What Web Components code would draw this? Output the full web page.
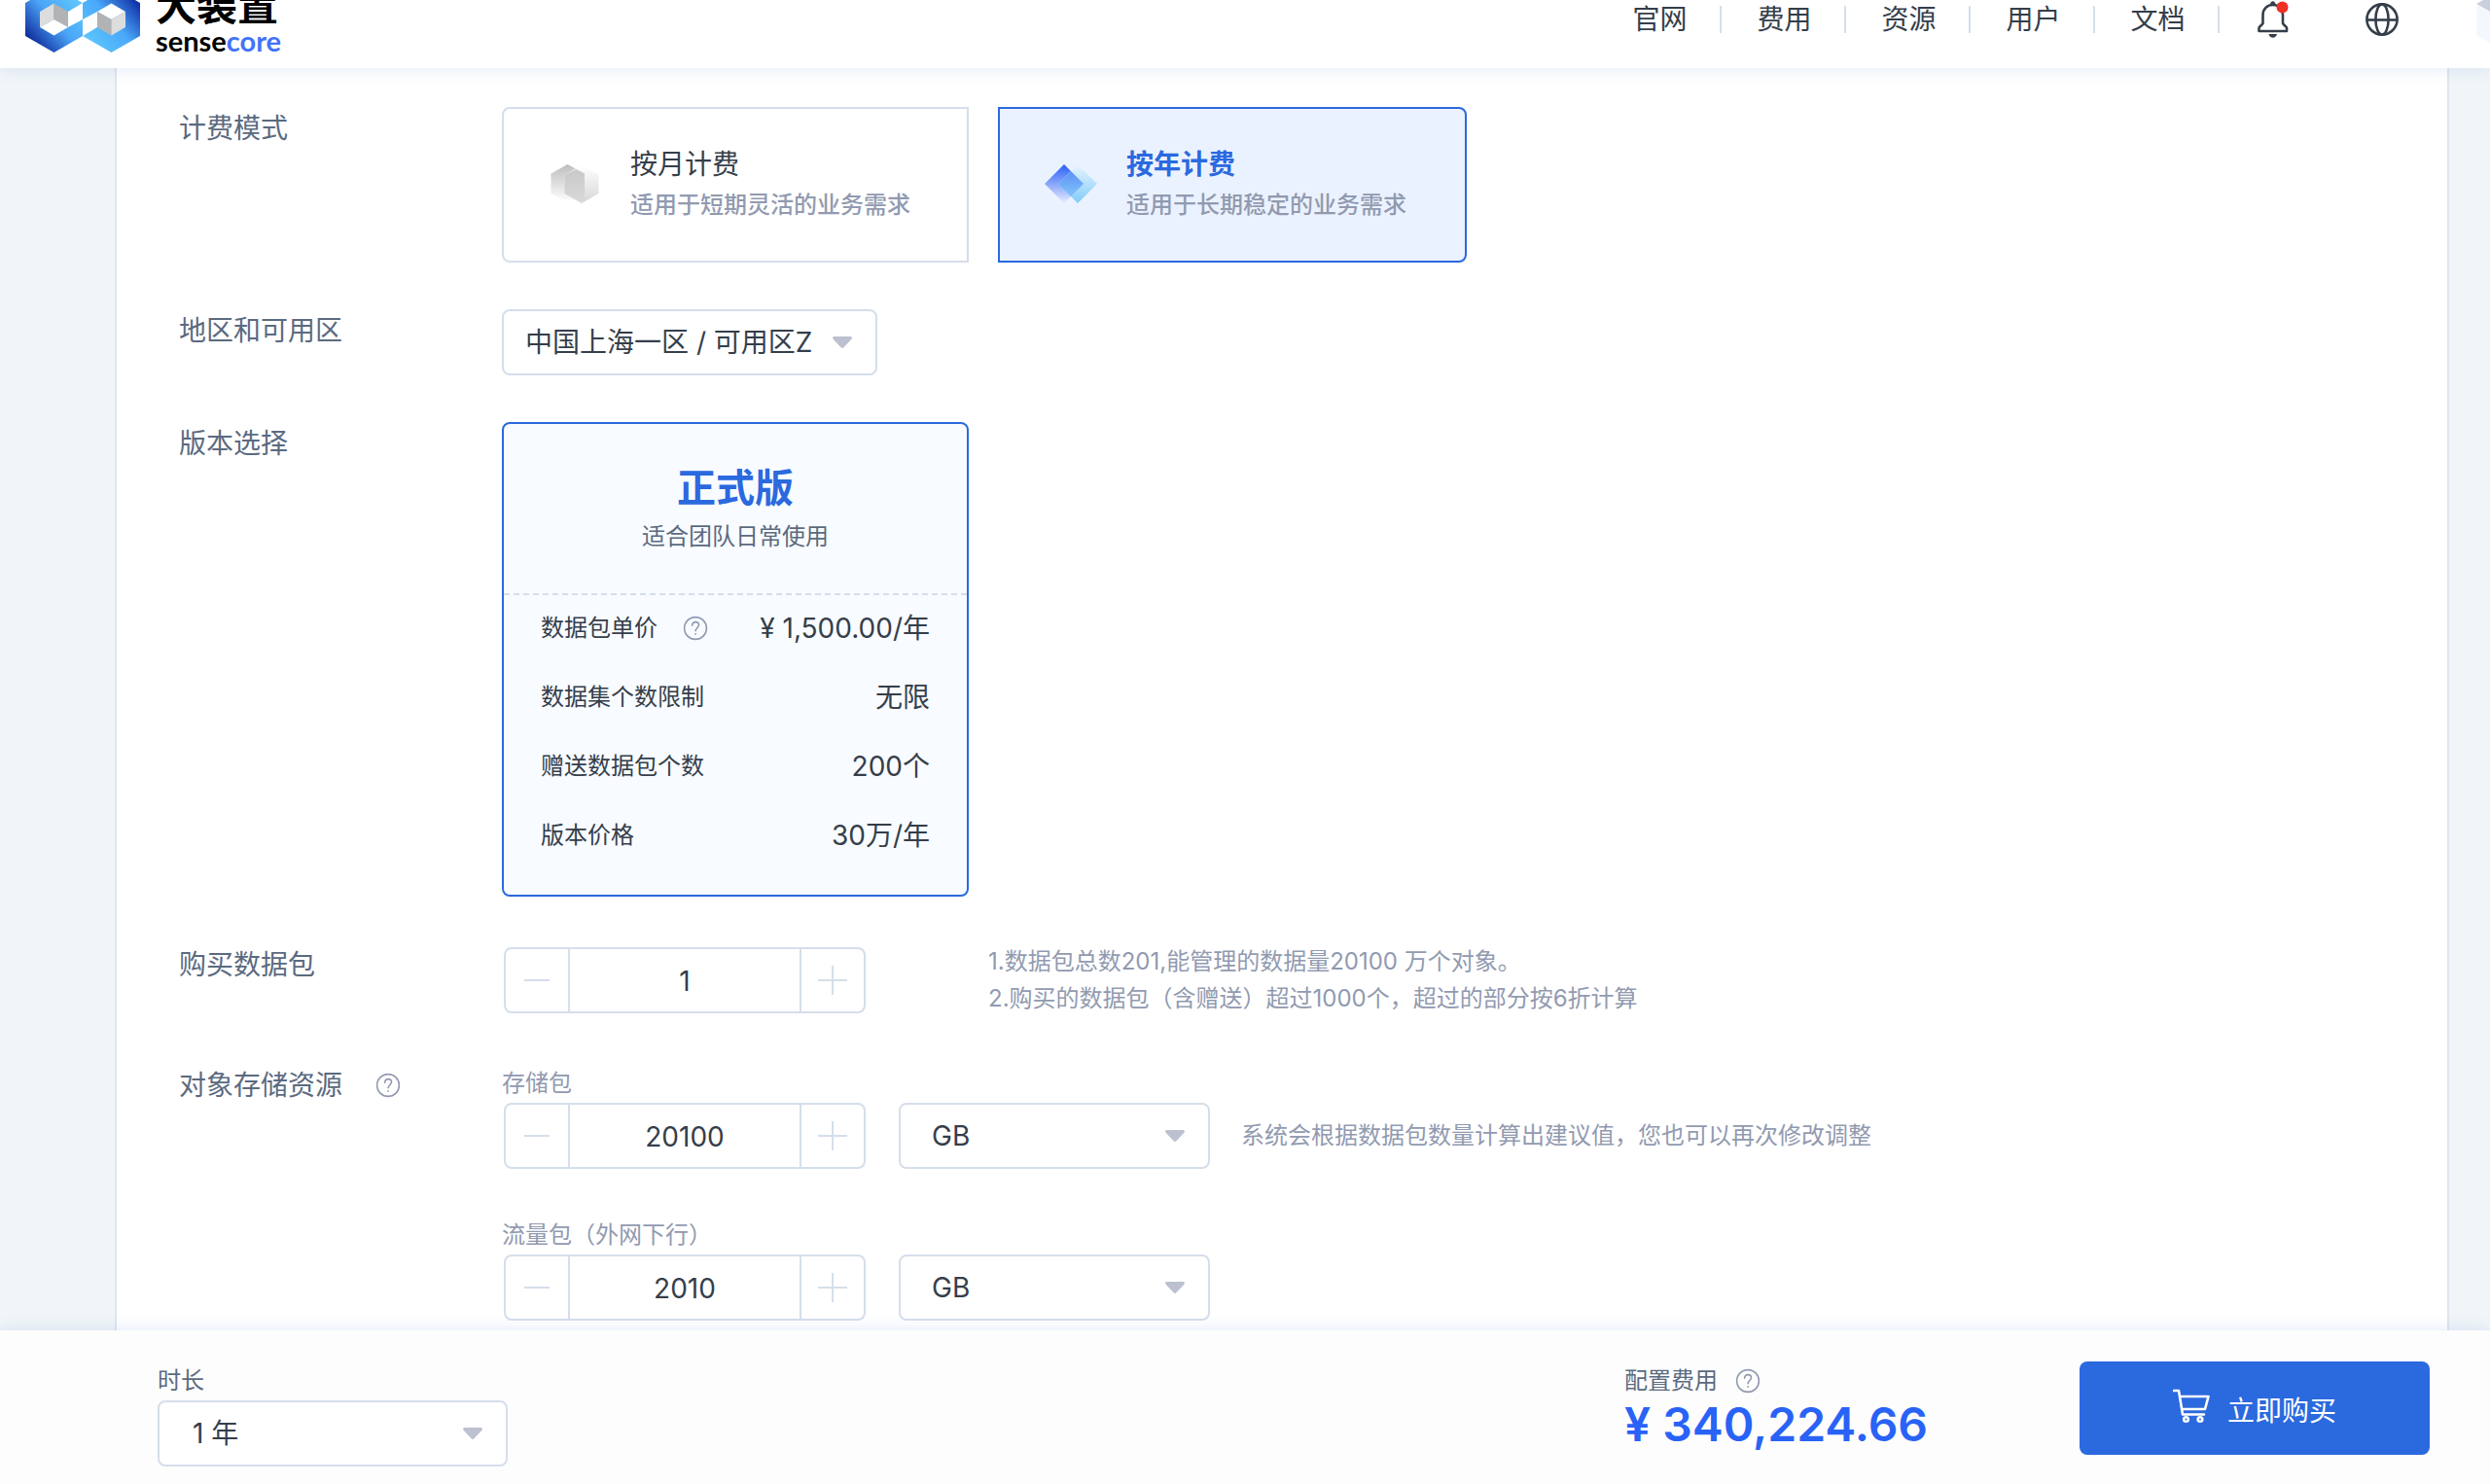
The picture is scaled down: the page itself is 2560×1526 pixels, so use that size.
<!DOCTYPE html>
<html lang="zh-CN">
<head>
<meta charset="utf-8">
<meta name="viewport" content="width=device-width, initial-scale=1">
<title>大装置 sensecore</title>
<style>
  :root {
    --ink: #353e4a;
    --label: #5b6a80;
    --muted: #919ab0;
    --line: #d5deeb;
    --primary: #2b69de;
    --bar-shadow: 0 0 16px rgba(60, 110, 210, .16);
  }
  html, body { margin: 0; height: 100%; }
  body {
    font-family: Inter, "Noto Sans CJK SC", sans-serif;
    font-size: 28px;
    line-height: 44px;
    color: var(--ink);
    background: #f1f5f8;
  }
  label { cursor: pointer; }
</style>
</head>
<body>
<purchase-page></purchase-page>

<script>
const define = (name, html, setup, options = {}) => {
  const template = document.createElement('template');
  template.innerHTML = html;
  customElements.define(name, class extends HTMLElement {
    static formAssociated = !!options.field;
    constructor() {
      super();
      this.attachShadow({ mode: 'open', delegatesFocus: !!options.field })
        .append(template.content.cloneNode(true));
    }
    connectedCallback() {
      if (setup) setup(this, this.shadowRoot);
    }
  });
};

/* Round question-mark hint */
define('help-tip', `
  <style>
    :host { display: inline-flex; }
    button { display: flex; padding: 0; border: 0; background: none; cursor: help; }
    svg { display: block; width: 26px; height: 26px; fill: none; stroke: var(--muted); stroke-width: 1.6; stroke-linecap: round; }
  </style>
  <button type="button" aria-label="说明">
    <svg viewBox="0 0 26 26"><circle cx="13" cy="13" r="11.4"/><path d="M9.6 10.2c0-2.2 1.5-3.6 3.5-3.6s3.4 1.3 3.4 3.2c0 2.6-3.4 2.9-3.4 6M13.1 18.8v.4"/></svg>
  </button>`);

/* Drop-down with an optional caption */
define('select-box', `
  <style>
    :host { display: flex; flex-direction: column; width: 320px; }
    label { font-size: 24px; line-height: 40px; color: var(--label); }
    label:empty { display: none; }
    .box { display: grid; align-items: center; }
    select, svg { grid-area: 1 / 1; }
    select {
      appearance: none; box-sizing: border-box; width: 100%; height: 68px; margin: 0;
      padding: 0 56px 0 var(--inset, 32px);
      border: 2px solid var(--line); border-radius: 8px; background: #fff;
      font: inherit; color: inherit; cursor: pointer;
    }
    svg { justify-self: end; width: 20px; height: 12px; margin-right: 26px; fill: #bcc0d0; pointer-events: none; }
  </style>
  <label for="field"></label>
  <div class="box">
    <select id="field"></select>
    <svg viewBox="0 0 20 12"><path d="M1.8 0h16.4c1.6 0 2.3 1.6 1.2 2.7l-8 8.500c-.8.9-2 .9-2.8 0l-8-8.500C-.5 1.600.2 0 1.800 0z"/></svg>
  </div>`, (host, root) => {
  root.querySelector('label').textContent = host.getAttribute('caption') || '';
  const select = root.querySelector('select');
  if (host.hasAttribute('name')) select.setAttribute('aria-label', host.getAttribute('name'));
  select.replaceChildren(...host.getAttribute('options').split('|').map(t => new Option(t)));
}, { field: true });

/* Number field with minus and plus buttons, with an optional caption */
define('number-stepper', `
  <style>
    :host { display: flex; flex-direction: column; }
    label { font-size: 24px; line-height: 40px; color: var(--muted); }
    label:empty { display: none; }
    .box {
      display: grid; grid-template-columns: 64px 1fr 64px; box-sizing: border-box;
      width: 372px; height: 68px; margin: 0 2px;
      border: 2px solid var(--line); border-radius: 8px; background: #fff; overflow: hidden;
    }
    button { display: grid; place-items: center; padding: 0; border: 0; background: none; cursor: pointer; }
    svg { width: 30px; height: 30px; stroke: var(--line); stroke-width: 2; }
    input {
      box-sizing: border-box; width: 100%; min-width: 0; margin: 0; padding: 2px 0 0; border: 0;
      border-left: 2px solid var(--line); border-right: 2px solid var(--line);
      background: none; text-align: center; font: inherit; color: inherit;
    }
  </style>
  <label for="field"></label>
  <div class="box">
    <button type="button" aria-label="减少"><svg viewBox="0 0 30 30"><path d="M2 15h26"/></svg></button>
    <input id="field" type="text" inputmode="numeric">
    <button type="button" aria-label="增加"><svg viewBox="0 0 30 30"><path d="M0 15h30M15 0v30"/></svg></button>
  </div>`, (host, root) => {
  root.querySelector('label').textContent = host.getAttribute('caption') || '';
  const input = root.querySelector('input');
  input.value = host.getAttribute('value');
  if (host.hasAttribute('name')) input.setAttribute('aria-label', host.getAttribute('name'));
  const [minus, plus] = root.querySelectorAll('button');
  minus.onclick = () => { input.value = Math.max(1, Number(input.value) - 1); };
  plus.onclick = () => { input.value = Number(input.value) + 1; };
}, { field: true });

/* Form row: label column and control column */
define('form-row', `
  <style>
    :host { display: grid; grid-template-columns: 332px 1fr; align-items: start; }
    .label { display: flex; align-items: center; gap: 34px; color: var(--label); }
  </style>
  <div class="label"><slot name="label"></slot></div>
  <div><slot></slot></div>`);

/* Monthly or yearly billing */
define('billing-mode', `
  <style>
    :host { display: block; }
    .cards { display: grid; grid-template-columns: 480px 482px; gap: 30px; }
    label {
      display: flex; align-items: center; gap: 30px; box-sizing: border-box; height: 160px;
      padding: 0 46px 2px; border: 2px solid var(--line); border-radius: 8px 0 0 8px; background: #fff; cursor: pointer;
    }
    label:last-child { border-radius: 0 8px 8px 0; }
    label:has(input:checked) { border-color: var(--primary); background: #ebf2ff; }
    label:has(input:checked) .name { color: var(--primary); font-weight: 700; }
    input { position: absolute; opacity: 0; margin: 0; pointer-events: none; }
    svg { flex: none; width: 54px; height: 40px; }
    .text { display: flex; flex-direction: column; }
    .hint { font-size: 24px; line-height: 40px; font-weight: 500; color: var(--muted); }
  </style>
  <div class="cards" role="radiogroup" aria-label="计费模式">
    <label>
      <input type="radio" name="mode">
      <svg viewBox="0 0 54 40">
        <defs>
          <linearGradient id="a" x2="0" y2="1"><stop stop-color="#bdbdbd"/><stop offset="1" stop-color="#fff"/></linearGradient>
          <linearGradient id="b" x2="0" y2="1"><stop stop-color="#fff"/><stop offset="1" stop-color="#d6d6d6"/></linearGradient>
          <linearGradient id="c" x2="0" y2="1"><stop stop-color="#c8c8c8"/><stop offset="1" stop-color="#dadada"/></linearGradient>
        </defs>
        <path fill="url(#a)" d="M19.500 0L37 9.600v20L19.500 39 2.500 29.500v-20z"/>
        <path fill="url(#b)" d="M34 1l17.500 9.500v19.500L34 40 16.500 30V10.500z"/>
        <path fill="url(#c)" d="M16.500 10.500L28.500 5 37 9.600v28.500L34 40 16.500 30z"/>
      </svg>
      <span class="text"><span class="name">按月计费</span><span class="hint">适用于短期灵活的业务需求</span></span>
    </label>
    <label>
      <input type="radio" name="mode" checked>
      <svg viewBox="0 0 54 40">
        <defs>
          <linearGradient id="d" x2="0" y2="1"><stop stop-color="#2a5ff5"/><stop offset="1" stop-color="#e6ecff"/></linearGradient>
          <linearGradient id="e" x2="0" y2="1"><stop stop-color="#eaf3ff"/><stop offset="1" stop-color="#7fcdf8"/></linearGradient>
          <linearGradient id="f" x2="0" y2="1"><stop stop-color="#5b92f6"/><stop offset="1" stop-color="#83c3f8"/></linearGradient>
        </defs>
        <path fill="url(#d)" d="M20 0l20 20-20 20L0 20z"/>
        <path fill="url(#e)" d="M34 0l20 20-20 20-20-20z"/>
        <path fill="url(#f)" d="M27 7l13 13-13 13-13-13z"/>
      </svg>
      <span class="text"><span class="name">按年计费</span><span class="hint">适用于长期稳定的业务需求</span></span>
    </label>
  </div>`);

/* Edition summary card */
define('edition-card', `
  <style>
    :host { display: block; box-sizing: border-box; width: 480px; border: 2px solid var(--primary); border-radius: 8px; background: #f8fbff; }
    header { padding: 36px 0 38px; text-align: center; border-bottom: 2px dashed var(--line); }
    h2 { margin: 0; font-size: 40px; line-height: 60px; font-weight: 700; color: var(--primary); }
    p { margin: 0; font-size: 24px; line-height: 40px; color: var(--label); }
    dl { display: grid; gap: 27px; margin: 0; padding: 12px 38px 39px; }
    dl div { display: flex; justify-content: space-between; align-items: center; }
    dt { display: flex; align-items: center; gap: 26px; font-size: 24px; }
    dd { margin: 0; }
  </style>
  <header><h2>正式版</h2><p>适合团队日常使用</p></header>
  <dl>
    <div><dt>数据包单价<help-tip></help-tip></dt><dd>¥ 1,500.00/年</dd></div>
    <div><dt>数据集个数限制</dt><dd>无限</dd></div>
    <div><dt>赠送数据包个数</dt><dd>200个</dd></div>
    <div><dt>版本价格</dt><dd>30万/年</dd></div>
  </dl>`);

/* Logo: two linked hexagons and the name */
define('brand-logo', `
  <style>
    a { display: flex; align-items: center; gap: 16px; color: #000; text-decoration: none; }
    svg { flex: none; width: 118px; height: 68px; }
    .cn { display: block; font-size: 42px; line-height: 44px; font-weight: 700; }
    .en { display: block; font-family: Lato, sans-serif; font-size: 29px; line-height: 28px; font-weight: 700; }
    b { font-weight: inherit; color: #4373f7; }
  </style>
  <a href="#">
    <svg viewBox="0 0 118 68">
      <defs>
        <linearGradient id="l" x1="1" y1="0" x2="0" y2="1"><stop offset=".1" stop-color="#62cbfc"/><stop offset=".5" stop-color="#4aa5f8"/><stop offset=".85" stop-color="#1232a0"/></linearGradient>
        <linearGradient id="m" x1="0" y1="1" x2="1" y2="0"><stop offset="0" stop-color="#62d0fd"/><stop offset=".5" stop-color="#4aa8fa"/><stop offset=".85" stop-color="#1232a8"/></linearGradient>
      </defs>
      <path fill="url(#l)" d="M29.500 0L59 17 44 26v16l15-8v17L29.500 68 0 51V17z"/>
      <path fill="url(#m)" d="M88.500 0L118 17v34L88.500 68 59 51l15-9V26L59 34V17z"/>
      <path fill="#dcdddd" d="M15 26l14.500-8.500V34L15 42z"/><path fill="#b3b3b3" d="M29.500 17.500L44 26v16l-14.500-8z"/><path fill="#fff" d="M15 42l14.500-8L44 42l-14.500 8.500z"/>
      <path fill="#fff" d="M74 26l14.500-8.500L103 26l-14.500 8z"/><path fill="#b3b3b3" d="M74 26l14.500 8v16.500L74 42z"/><path fill="#dcdddd" d="M88.500 34l14.500-8v16l-14.500 8.500z"/>
    </svg>
    <span><span class="cn">大装置</span><span class="en">sense<b>core</b></span></span>
  </a>`);

define('top-bar', `
  <style>
    :host {
      display: flex; align-items: center; flex: none; height: 100px; margin-top: -30px; padding-left: 26px;
      background: #fff; box-shadow: var(--bar-shadow); position: relative;
    }
    nav { display: flex; margin-left: auto; }
    nav a {
      box-sizing: border-box; width: 128px; padding-left: 3px; line-height: 28px; text-align: center;
      border-right: 2px solid var(--line); color: inherit; text-decoration: none;
    }
    button { display: flex; padding: 0; border: 0; background: none; cursor: pointer; }
    .bell { margin-left: 39px; }
    .globe { margin-left: 79px; }
    .avatar { width: 14px; margin-left: 80px; overflow: hidden; }
    svg { flex: none; display: block; fill: none; }
    .bell svg, .globe svg { stroke: var(--ink); stroke-width: 2.600; }
  </style>
  <brand-logo></brand-logo>
  <nav>
    <a href="#">官网</a><a href="#">费用</a><a href="#">资源</a><a href="#">用户</a><a href="#">文档</a>
  </nav>
  <button class="bell" type="button" aria-label="消息">
    <svg width="32" height="38" viewBox="0 0 32 38"><path stroke-linejoin="round" d="M1.500 31v-3.500c0-1 3.500-3 4-4.500V14.500C5.500 8 10 4 15.800 4S26 8 26 14.500V23c.5 1.500 4 3.500 4 4.500V31z"/><path fill="var(--ink)" stroke="none" d="M13 4c0-5 5.500-5 5.500 0zM11.500 34h8.500c-1 5-7.500 5-8.500 0z"/><circle cx="25.500" cy="6.500" r="6" fill="#ee3124" stroke="none"/></svg>
  </button>
  <button class="globe" type="button" aria-label="语言">
    <svg width="34" height="34" viewBox="0 0 34 34"><circle cx="17" cy="17" r="15.600"/><ellipse cx="17" cy="17" rx="6.600" ry="15.600"/><path d="M1.400 17.500h31.200"/></svg>
  </button>
  <button class="avatar" type="button" aria-label="账户">
    <svg width="56" height="66" viewBox="0 0 56 66"><path fill="#c9cfdc" d="M0 17L28 1l28 16-28 16z"/><path fill="#f4f8fe" d="M0 17l28 16v32L0 49z"/><path fill="#e4eaf5" d="M56 17L28 33v32l28-16z"/></svg>
  </button>`);

define('order-bar', `
  <style>
    :host {
      display: flex; align-items: flex-start; flex: none; box-sizing: border-box; height: 158px;
      padding: 32px 62px 0 162px; background: #fdfdfd; box-shadow: var(--bar-shadow); position: relative;
    }
    select-box { width: 360px; margin-right: auto; --inset: 34px; }
    .cost { width: 468px; }
    .title { display: flex; align-items: center; gap: 18px; font-size: 24px; line-height: 40px; color: var(--label); }
    output { display: block; font-size: 48px; line-height: 50px; font-weight: 600; color: #2962f6; }
    .buy {
      display: flex; align-items: center; justify-content: center; gap: 18px; width: 360px; height: 96px;
      padding: 0; border: 0; border-radius: 8px; background: var(--primary); color: #fff; font: inherit; cursor: pointer;
    }
    .buy svg { width: 38px; height: 36px; fill: none; stroke: #fff; stroke-width: 2.600; margin-bottom: 4px; }
    .buy span { padding-top: 6px; }
  </style>
  <select-box caption="时长" options="1 年|2 年|3 年"></select-box>
  <div class="cost">
    <div class="title">配置费用<help-tip></help-tip></div>
    <output>¥ 340,224.66</output>
  </div>
  <button class="buy" type="button">
    <svg viewBox="0 0 38 36"><path stroke-linecap="round" stroke-linejoin="round" d="M1 2h5l4 24.500h22M7.500 8h29l-3.500 13H9.800"/><circle cx="13.500" cy="31.500" r="2.300"/><circle cx="28" cy="31.500" r="2.300"/></svg>
    <span>立即购买</span>
  </button>`);

define('purchase-page', `
  <style>
    :host { display: flex; flex-direction: column; height: 100vh; overflow: hidden; }
    top-bar, order-bar { z-index: 1; }
    main {
      flex: 1; min-height: 0; overflow: hidden; margin: 0 42px 0 118px; padding: 40px 64px 0;
      border: solid #e0e6ef; border-width: 0 2px; background: #fff;
      display: flex; flex-direction: column; gap: 48px;
    }
    form-row { flex: none; }
    .region { width: 386px; --inset: 22px; }
    .line { display: flex; align-items: center; gap: 124px; }
    .stack { display: grid; gap: 48px; }
    .resource { display: flex; align-items: flex-end; gap: 32px; }
    p { margin: 0; font-size: 24px; line-height: 38px; color: var(--muted); }
    .resource p { line-height: 68px; }
  </style>
  <top-bar></top-bar>
  <main>
    <form-row><span slot="label">计费模式</span><billing-mode></billing-mode></form-row>
    <form-row>
      <label slot="label" for="region">地区和可用区</label>
      <select-box id="region" class="region" name="地区和可用区" options="中国上海一区 / 可用区Z"></select-box>
    </form-row>
    <form-row><span slot="label">版本选择</span><edition-card></edition-card></form-row>
    <form-row>
      <label slot="label" for="packs">购买数据包</label>
      <div class="line">
        <number-stepper id="packs" name="购买数据包" value="1"></number-stepper>
        <p>1.数据包总数201,能管理的数据量20100 万个对象。<br>2.购买的数据包（含赠送）超过1000个，超过的部分按6折计算</p>
      </div>
    </form-row>
    <form-row>
      <span slot="label">对象存储资源</span><help-tip slot="label"></help-tip>
      <div class="stack">
        <div class="resource">
          <number-stepper caption="存储包" value="20100"></number-stepper>
          <select-box name="存储包单位" options="GB|TB"></select-box>
          <p>系统会根据数据包数量计算出建议值，您也可以再次修改调整</p>
        </div>
        <div class="resource">
          <number-stepper caption="流量包（外网下行）" value="2010"></number-stepper>
          <select-box name="流量包单位" options="GB|TB"></select-box>
        </div>
      </div>
    </form-row>
  </main>
  <order-bar></order-bar>`);
</script>
</body>
</html>
